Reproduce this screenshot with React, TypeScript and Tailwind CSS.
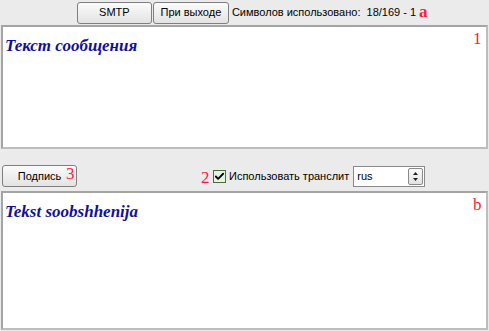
import { Check } from 'lucide-react';

const ui = "font-['Liberation_Sans',sans-serif] text-[11px] text-black";

function Btn({ label, className = '' }: { label: string; className?: string }) {
  return (
    <button
      className={`h-[22px] rounded-[3px] border border-[#7f7f7f] bg-gradient-to-b from-[#fbfbfb] to-[#e3e3e3] ${ui} ${className}`}
    >
      {label}
    </button>
  );
}

function Mark({ children, className = '' }: { children: string; className?: string }) {
  return (
    <span
      className={`absolute font-['Liberation_Serif',serif] text-[17px] leading-none text-[#ff1a3c] ${className}`}
    >
      {children}
    </span>
  );
}

export default function App() {
  return (
    <div className="relative flex h-[331px] w-[489px] flex-col bg-[#ebebeb]">
      {/* Top bar */}
      <div className="flex h-[25px] items-center justify-center gap-[1px] pl-[4px]">
        <Btn label="SMTP" className="w-[75px]" />
        <Btn label="При выходе" className="w-[76px]" />
        <span className={`ml-[2px] whitespace-pre ${ui}`}>Символов использовано:  18/169 - 1</span>
      </div>

      {/* Message text */}
      <div className="mx-[1px] h-[124px] border-2 border-[#a4a4a4] border-b-[#bdbdbd] border-r-[#bdbdbd] bg-white px-[2px] pt-[6px]">
        <span className="font-['Liberation_Serif',serif] text-[17px] font-bold italic text-[#10109c]">
          Текст сообщения
        </span>
      </div>

      {/* Middle bar */}
      <div className="flex h-[42px] items-end pb-[4px] pl-[2px]">
        <Btn label="Подпись" className="w-[75px]" />
        <div className="ml-[136px] flex h-[22px] items-center">
          <span className="flex h-[13px] w-[13px] items-center justify-center border border-[#4a6b3a] bg-[#e7f3dd]">
            <Check className="h-[11px] w-[11px] text-black" strokeWidth={4} />
          </span>
          <span className={`ml-[3px] ${ui}`}>Использовать транслит</span>
          <div className="ml-[4px] flex h-[21px] w-[72px] items-stretch border border-[#8a8a8a] bg-white">
            <span className={`flex flex-1 items-center pl-[3px] ${ui}`}>rus</span>
            <span className="my-[1px] mr-[1px] flex w-[15px] flex-col items-center justify-center rounded-[2px] border border-[#8a8a8a] bg-gradient-to-b from-[#fafafa] to-[#e2e2e2]">
              <svg width="7" height="11" viewBox="0 0 7 11">
                <path d="M3.5 1 L6 4 H1 Z" fill="#222" />
                <path d="M3.5 10 L6 7 H1 Z" fill="#222" />
              </svg>
            </span>
          </div>
        </div>
      </div>

      {/* Translit text */}
      <div className="mx-[1px] mb-[1px] flex-1 border-2 border-[#a4a4a4] border-b-[#bdbdbd] border-r-[#bdbdbd] bg-white px-[2px] pt-[6px]">
        <span className="font-['Liberation_Serif',serif] text-[17px] font-bold italic text-[#10109c]">
          Tekst soobshhenija
        </span>
      </div>

      <Mark className="left-[419px] top-[3px] font-bold">a</Mark>
      <Mark className="left-[473px] top-[30px]">1</Mark>
      <Mark className="left-[66px] top-[165px]">3</Mark>
      <Mark className="left-[201px] top-[169px]">2</Mark>
      <Mark className="left-[473px] top-[196px]">b</Mark>
    </div>
  );
}
